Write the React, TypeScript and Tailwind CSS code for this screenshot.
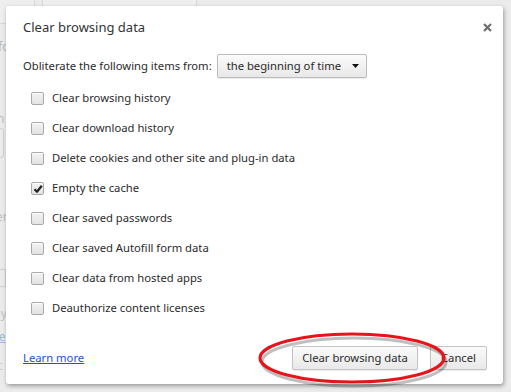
import React from "react";

const items: { label: string; checked: boolean }[] = [
  { label: "Clear browsing history", checked: false },
  { label: "Clear download history", checked: false },
  { label: "Delete cookies and other site and plug-in data", checked: false },
  { label: "Empty the cache", checked: true },
  { label: "Clear saved passwords", checked: false },
  { label: "Clear saved Autofill form data", checked: false },
  { label: "Clear data from hosted apps", checked: false },
  { label: "Deauthorize content licenses", checked: false },
];

function Checkbox({ checked }: { checked: boolean }) {
  return (
    <div className="relative w-[13px] h-[13px] rounded-[2px] border border-[#a9a9a9] bg-gradient-to-b from-[#f3f3f3] to-[#e2e2e2] shadow-[inset_0_1px_0_#fff] shrink-0">
      {checked && (
        <svg className="absolute left-[1px] top-[1px]" width="10" height="10" viewBox="0 0 10 10">
          <path d="M1.5 5.2 L4 7.8 L8.8 1.8" fill="none" stroke="#222" strokeWidth="2.2" strokeLinejoin="round" />
        </svg>
      )}
    </div>
  );
}

export default function App() {
  return (
    <div
      className="relative w-[511px] h-[392px] overflow-hidden bg-[#ebebeb] text-[#333]"
      style={{ fontFamily: '"Noto Sans", "Open Sans", sans-serif' }}
    >
      {/* faint page behind the overlay */}
      <div className="absolute left-[-10px] top-[-4px] w-[45px] h-[28px] border border-[#d6d6d6] rounded-[3px] bg-[#eeeeee]" />
      <div className="absolute left-[42px] top-[-4px] w-[155px] h-[28px] border border-[#d6d6d6] rounded-[3px] bg-[#eeeeee]" />
      <div className="absolute left-[-2px] top-[38px] text-[12px] text-[#b5b5b5]">fo</div>
      <div className="absolute left-[-3px] top-[110px] text-[12px] text-[#c0c0c0]">n</div>
      <div className="absolute left-[-8px] top-[128px] w-[12px] h-[30px] border border-[#d0d0d0] rounded-[3px]" />
      <div className="absolute left-[-4px] top-[208px] text-[12px] text-[#c0c0c0]">er</div>
      <div className="absolute left-[-8px] top-[269px] w-[14px] h-[18px] border border-[#d0d0d0]" />
      <div className="absolute left-[-6px] top-[305px] text-[12px] text-[#c0c0c0]">ay</div>
      <div className="absolute left-[-6px] top-[328px] text-[12px] text-[#9fb4dd] underline">re</div>
      <div className="absolute left-[-3px] top-[357px] text-[12px] text-[#c8c8c8]">c</div>

      {/* dialog */}
      <div className="absolute left-[6px] top-[6px] w-[497px] h-[378px] bg-white rounded-[3px] shadow-[1px_2px_4px_rgba(0,0,0,0.35)] flex flex-col px-[17px] pt-[11px]">
        <div className="flex items-start justify-between">
          <div className="text-[13px] text-[#333] leading-[20px]">Clear browsing data</div>
          <svg className="mt-[6px] mr-[-6px]" width="9" height="9" viewBox="0 0 9 9">
            <path d="M1 1 L8 8 M8 1 L1 8" stroke="#6e6e6e" strokeWidth="2.2" />
          </svg>
        </div>

        <div className="flex items-center mt-[17px] h-[24px] text-[11.25px]">
          <span className="text-[#2b2b2b]">Obliterate the following items from:</span>
          <div className="ml-[5px] h-[24px] w-[150px] flex items-center justify-between pl-[9px] pr-[7px] rounded-[2px] border border-[#bcbcbc] bg-gradient-to-b from-[#fbfbfb] to-[#e8e8e8] shadow-[0_1px_1px_rgba(0,0,0,0.08)]">
            <span className="text-[#2b2b2b]">the beginning of time</span>
            <svg width="7" height="4" viewBox="0 0 7 4">
              <path d="M0 0 H7 L3.5 4 Z" fill="#111" />
            </svg>
          </div>
        </div>

        <div className="flex flex-col mt-[5px] pl-[8px]">
          {items.map((it) => (
            <div key={it.label} className="flex items-center h-[30px] gap-[8px] text-[11.25px]">
              <Checkbox checked={it.checked} />
              <span className="text-[#2b2b2b]">{it.label}</span>
            </div>
          ))}
        </div>

        <div className="flex items-center justify-between mt-[23px]">
          <a className="text-[11.25px] text-[#1b52d1] underline cursor-pointer">Learn more</a>
          <div className="flex gap-[12px] mr-[-1px]">
            <button className="h-[24px] w-[126px] text-[11.25px] text-[#2b2b2b] rounded-[2px] border border-[#c3c3c3] bg-gradient-to-b from-[#fafafa] to-[#e9e9e9] shadow-[0_1px_1px_rgba(0,0,0,0.08)]">
              Clear browsing data
            </button>
            <button className="h-[24px] w-[57px] text-[11.25px] text-[#2b2b2b] rounded-[2px] border border-[#c3c3c3] bg-gradient-to-b from-[#fafafa] to-[#e9e9e9] shadow-[0_1px_1px_rgba(0,0,0,0.08)]">
              Cancel
            </button>
          </div>
        </div>
      </div>

      {/* red ellipse annotation */}
      <svg className="absolute left-0 top-0 pointer-events-none" width="511" height="392" viewBox="0 0 511 392">
        <ellipse cx="353" cy="360" rx="92" ry="24" fill="none" stroke="rgba(0,0,0,0.25)" strokeWidth="3" transform="translate(1 2)" />
        <ellipse cx="352" cy="358" rx="92" ry="24" fill="none" stroke="#e8141b" strokeWidth="3.2" />
      </svg>
    </div>
  );
}
